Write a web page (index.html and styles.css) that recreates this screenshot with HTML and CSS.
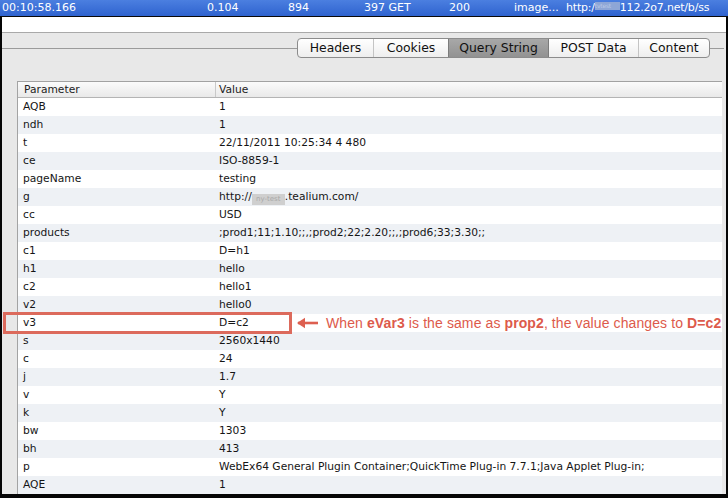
FILE: index.html
```html
<!DOCTYPE html>
<html>
<head>
<meta charset="utf-8">
<link rel="stylesheet" href="styles.css">
</head>
<body>
<div class="topbar">
  <span class="c c1">00:10:58.166</span>
  <span class="c c2">0.104</span>
  <span class="c c3">894</span>
  <span class="c c4">397 GET</span>
  <span class="c c5">200</span>
  <span class="c c6">image...</span>
  <span class="c c7">http:/<span class="blur-top">tvtest</span>112.2o7.net/b/ss</span>
</div>
<div class="panel">
  <div class="strip"></div>
  <div class="toolbar">
    <div class="rule"></div>
    <div class="tabs">
      <div class="tab t-headers">Headers</div>
      <div class="tab t-cookies">Cookies</div>
      <div class="tab t-query selected">Query String</div>
      <div class="tab t-post">POST Data</div>
      <div class="tab t-content">Content</div>
    </div>
    <div class="rule rule-end"></div>
  </div>
  <div class="table">
    <div class="row head"><div class="k">Parameter</div><div class="v vh">Value</div></div>
    <div class="row"><div class="k">AQB</div><div class="v">1</div></div>
    <div class="row"><div class="k">ndh</div><div class="v">1</div></div>
    <div class="row"><div class="k">t</div><div class="v">22/11/2011 10:25:34 4 480</div></div>
    <div class="row"><div class="k">ce</div><div class="v">ISO-8859-1</div></div>
    <div class="row"><div class="k">pageName</div><div class="v">testing</div></div>
    <div class="row"><div class="k">g</div><div class="v">http://<span class="blur">ny-test</span>.tealium.com/</div></div>
    <div class="row"><div class="k">cc</div><div class="v">USD</div></div>
    <div class="row"><div class="k">products</div><div class="v">;prod1;11;1.10;;,;prod2;22;2.20;;,;prod6;33;3.30;;</div></div>
    <div class="row"><div class="k">c1</div><div class="v">D=h1</div></div>
    <div class="row"><div class="k">h1</div><div class="v">hello</div></div>
    <div class="row"><div class="k">c2</div><div class="v">hello1</div></div>
    <div class="row"><div class="k">v2</div><div class="v">hello0</div></div>
    <div class="row marked"><div class="k">v3</div><div class="v">D=c2</div>
      <div class="redbox"></div>
      <div class="callout">
        <svg class="arrow" width="22" height="12" viewBox="0 0 22 12"><path d="M1 6 H21" stroke="#dd5f50" stroke-width="2.6" fill="none"/><path d="M0 6 L8 0.8 L8 11.2 Z" fill="#dd5f50"/></svg>
        <span class="note">When <b>eVar3</b> is the same as <b>prop2</b>, the value changes to <b>D=c2</b></span>
      </div>
    </div>
    <div class="row"><div class="k">s</div><div class="v">2560x1440</div></div>
    <div class="row"><div class="k">c</div><div class="v">24</div></div>
    <div class="row"><div class="k">j</div><div class="v">1.7</div></div>
    <div class="row"><div class="k">v</div><div class="v">Y</div></div>
    <div class="row"><div class="k">k</div><div class="v">Y</div></div>
    <div class="row"><div class="k">bw</div><div class="v">1303</div></div>
    <div class="row"><div class="k">bh</div><div class="v">413</div></div>
    <div class="row"><div class="k">p</div><div class="v">WebEx64 General Plugin Container;QuickTime Plug-in 7.7.1;Java Applet Plug-in;</div></div>
    <div class="row"><div class="k">AQE</div><div class="v">1</div></div>
  </div>
</div>
</body>
</html>
```
FILE: styles.css
```css
html, body {
  margin: 0;
  padding: 0;
}
body {
  width: 728px;
  height: 498px;
  overflow: hidden;
  background: #050505;
  font-family: "DejaVu Sans", sans-serif;
}
.topbar {
  height: 16px;
  background: linear-gradient(#4b7fe0, #2f63cf);
  color: #fff;
  font-size: 11px;
  line-height: 16px;
  white-space: nowrap;
  overflow: hidden;
  display: flex;
  padding-left: 2px;
  border-bottom: 1px solid #0a0a0a;
}
.c { flex: none; }
.c1 { width: 205px; }
.c2 { width: 81px; }
.c3 { width: 76px; }
.c4 { width: 85px; }
.c5 { width: 65px; }
.c6 { width: 52px; }
.c7 { letter-spacing: -0.2px; }
.blur-top {
  display: inline-block;
  width: 25px;
  height: 8px;
  line-height: 8px;
  font-size: 6px;
  color: #b9c8e6;
  background: #8ea6d6;
  vertical-align: 1px;
  overflow: hidden;
}
.panel {
  margin: 0 2px;
  height: 477px;
  background: #e8e8e8;
  display: flex;
  flex-direction: column;
  overflow: hidden;
}
.strip {
  height: 15px;
  background: #fff;
  border-bottom: 1px solid #a9a9a9;
  flex: none;
}
.toolbar {
  display: flex;
  align-items: center;
  height: 20px;
  margin: 5px 0 23px;
  flex: none;
}
.rule {
  flex: 1;
  height: 1px;
  background: #9b9b9b;
}
.rule-end {
  flex: none;
  width: 14px;
  margin-right: 2px;
}
.tabs {
  display: flex;
  border: 1px solid #8c8c8c;
  border-radius: 4px;
  overflow: hidden;
  background: linear-gradient(#ffffff, #eeeeee);
  box-sizing: border-box;
  height: 20px;
}
.tab {
  font-size: 12.4px;
  line-height: 18px;
  color: #111;
  text-align: center;
  border-left: 1px solid #c4c4c4;
  box-sizing: border-box;
}
.tab:first-child { border-left: none; }
.t-headers { width: 75px; }
.t-cookies { width: 75px; }
.t-query { width: 101px; }
.t-post { width: 89px; }
.t-content { width: 71px; }
.tab.selected {
  background: linear-gradient(#a8a8a8, #929292);
  border-left-color: #7c7c7c;
  border-right: 1px solid #7c7c7c;
}
.t-post { border-left: none; }
.table {
  flex: 1;
  margin: 0 4px 0 15px;
  background: #fff;
  border-left: 1px solid #a3a3a3;
  font-size: 10.7px;
  color: #151515;
}
.row {
  display: grid;
  grid-template-columns: 197px 1fr;
  height: 18px;
  line-height: 18px;
  white-space: nowrap;
}
.row:nth-child(odd) { background: #eef1f5; }
.row.head {
  height: 15px;
  line-height: 15px;
  background: linear-gradient(#fbfbfb, #e9e9e9);
  border-top: 1px solid #a2a2a2;
  border-bottom: 1px solid #b4b4b4;
  color: #222;
}
.k { padding-left: 5px; }
.head .k { padding-left: 6px; }
.v { padding-left: 4px; }
.vh { border-left: 1px solid #c9c9c9; padding-left: 3px; }
.blur {
  display: inline-block;
  width: 33px;
  height: 11px;
  line-height: 11px;
  background: #cfcfcf;
  color: #a9a9a9;
  font-size: 7px;
  vertical-align: -1px;
  text-align: center;
}
.marked { position: relative; }
.redbox {
  position: absolute;
  left: -15px;
  top: -2px;
  width: 289px;
  height: 22px;
  border: 3px solid #dc6a5c;
  box-sizing: border-box;
}
.callout {
  position: absolute;
  left: 279px;
  top: 0;
  display: flex;
  align-items: center;
  height: 18px;
  gap: 7px;
}
.arrow { display: block; }
.note {
  font-family: "Liberation Sans", Arial, sans-serif;
  font-size: 14px;
  color: #dd5a4b;
  letter-spacing: 0.1px;
}
.note b { font-weight: bold; }
```
